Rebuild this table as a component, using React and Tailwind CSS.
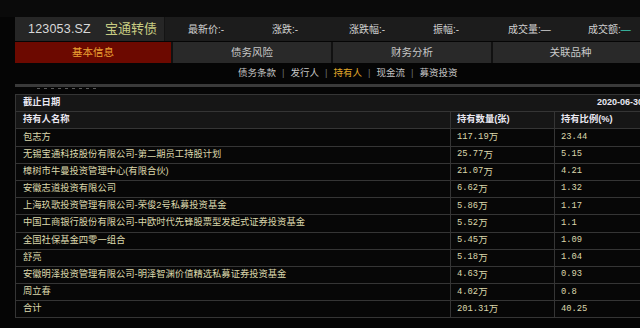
import React from 'react';

const stats = [
  { label: '最新价:', value: '-', w: 'w-[84px]' },
  { label: '涨跌:', value: '-', w: 'w-[77px]' },
  { label: '涨跌幅:', value: '-', w: 'w-[84px]' },
  { label: '振幅:', value: '-', w: 'w-[75px]' },
  { label: '成交量:', value: '—', w: 'w-[80px]' },
  { label: '成交额:', value: '—', w: 'w-[80px]', teal: true },
];

const tabs = [
  { name: '基本信息', w: 'w-[158px]', active: true },
  { name: '债务风险', w: 'w-[160px]' },
  { name: '财务分析', w: 'w-[160px]' },
  { name: '关联品种', w: 'w-[157px]' },
];

const subTabs = ['债务条款', '发行人', '持有人', '现金流', '募资投资'];

const rows = [
  ['包志方', '117.19', '23.44'],
  ['无锡宝通科技股份有限公司-第二期员工持股计划', '25.77', '5.15'],
  ['樟树市牛曼投资管理中心(有限合伙)', '21.07', '4.21'],
  ['安徽志道投资有限公司', '6.62', '1.32'],
  ['上海玖歌投资管理有限公司-荣俊2号私募投资基金', '5.86', '1.17'],
  ['中国工商银行股份有限公司-中欧时代先锋股票型发起式证券投资基金', '5.52', '1.1'],
  ['全国社保基金四零一组合', '5.45', '1.09'],
  ['舒亮', '5.18', '1.04'],
  ['安徽明泽投资管理有限公司-明泽智渊价值精选私募证券投资基金', '4.63', '0.93'],
  ['周立春', '4.02', '0.8'],
  ['合计', '201.31', '40.25'],
];

const cjk = "font-['Liberation_Sans','Noto_Sans_CJK_SC',sans-serif]";
const mono = "font-['Liberation_Mono','Noto_Sans_CJK_SC',monospace]";

export default function App() {
  return (
    <div className={`w-[640px] h-[328px] overflow-hidden bg-[#050505] ${cjk}`}>
      <div className="h-[17px] bg-[#0a0a0a]" />
      <div className="w-[670px] ml-[15px]">
        {/* quote header */}
        <div className="flex h-[24px] bg-[#1c1c1c] items-center">
          <div className="w-[150px] h-full flex items-center bg-[#262626] border-r border-[#141414] pl-[13px]">
            <span className="text-[12.5px] text-[#d8d8d8] tracking-[0.2px]">123053.SZ</span>
            <span className="ml-[14px] text-[13px] text-[#c8cc82]">宝通转债</span>
          </div>
          <div className="flex pl-[23px] text-[10px] text-[#d0d0d0]">
            {stats.map((s) => (
              <div key={s.label} className={`${s.w} shrink-0`}>
                {s.label}
                <span className={s.teal ? 'text-[#3cc8b4]' : ''}>{s.value}</span>
              </div>
            ))}
          </div>
        </div>

        {/* tabs */}
        <div className="flex h-[21px] mt-[1px]">
          {tabs.map((t) => (
            <div
              key={t.name}
              className={`${t.w} shrink-0 flex items-center justify-center text-[10.5px] border-r-2 border-[#111] ${
                t.active ? 'bg-[#6c0900] text-[#eca233]' : 'bg-[#292929] text-[#c8c8c8]'
              }`}
            >
              {t.name}
            </div>
          ))}
        </div>

        {/* sub tabs */}
        <div className="h-[21px] flex items-center pl-[223px] text-[9.5px] text-[#c4c4c4]">
          {subTabs.map((s, i) => (
            <React.Fragment key={s}>
              {i > 0 && <span className="mx-[6px] text-[#6a6a6a]">|</span>}
              <span className={s === '持有人' ? 'text-[#e0a82a]' : ''}>{s}</span>
            </React.Fragment>
          ))}
        </div>

        {/* separator band, with the clipped remains of the section above */}
        <div className="h-[3px] bg-[#3a3a3a]" />
        <div className="h-[7px] flex gap-[4px] pl-[22px] pt-[1px]">
          {[0, 1, 2, 3, 4, 5, 6, 7, 8].map((i) => (
            <div key={i} className="w-[3px] h-[1px] bg-[#5a5a5a]" />
          ))}
        </div>

        {/* table */}
        <div className="border-l border-b border-[#353535] text-[9.3px]">
          <div className="h-[17.2px] flex items-center justify-between bg-[#161616] border-t border-[#353535] pl-[7px] pr-[42px] font-bold text-[#eae8f2]">
            <span>截止日期</span>
            <span className="text-[9px]">2020-06-30</span>
          </div>
          <div className="h-[17.2px] flex bg-[#161616] border-t border-[#353535] font-bold text-[#eae8f2]">
            <div className="w-[435px] shrink-0 flex items-center pl-[7px] border-r border-[#353535]">持有人名称</div>
            <div className="w-[104px] shrink-0 flex items-center pl-[6px] border-r border-[#353535]">持有数量(张)</div>
            <div className="flex-1 flex items-center pl-[6px]">持有比例(%)</div>
          </div>
          {rows.map((r) => (
            <div key={r[0]} className="h-[17.2px] flex bg-[#070707] border-t border-[#353535] text-[#dcd8ac]">
              <div className="w-[435px] shrink-0 flex items-center pl-[7px] border-r border-[#353535] whitespace-nowrap">{r[0]}</div>
              <div className="w-[104px] shrink-0 flex items-center pl-[6px] border-r border-[#353535]">
                <span className={`${mono} text-[8.8px]`}>{r[1]}</span>
                <span className="text-[9.5px]">万</span>
              </div>
              <div className={`flex-1 flex items-center pl-[6px] ${mono} text-[8.8px]`}>{r[2]}</div>
            </div>
          ))}
        </div>
      </div>
    </div>
  );
}
